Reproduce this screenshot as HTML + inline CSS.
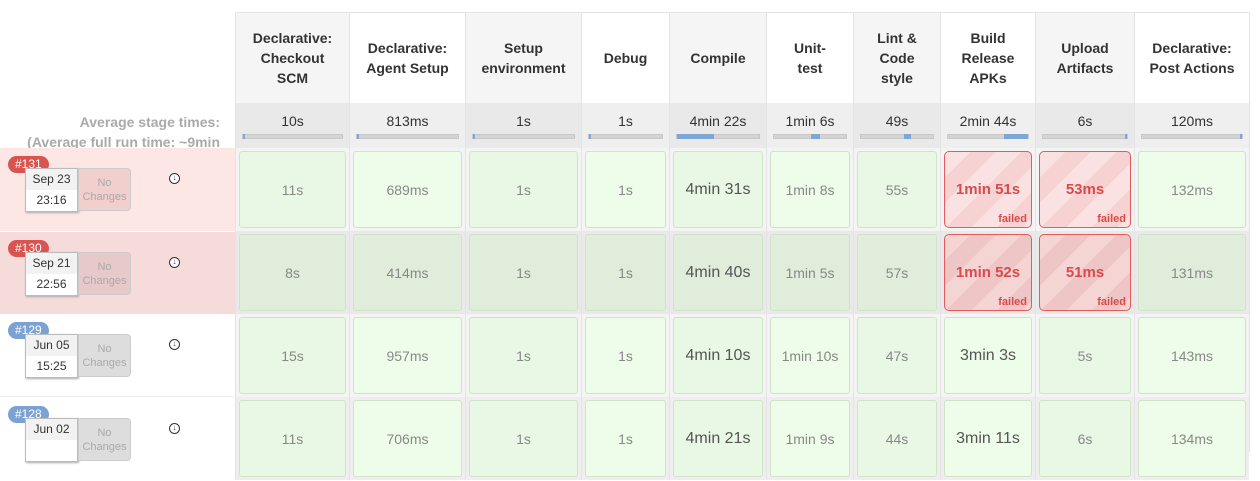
<!DOCTYPE html>
<html><head><meta charset="utf-8"><style>
*{box-sizing:border-box;margin:0;padding:0}
body{width:1260px;height:435px;overflow:hidden;background:#fff;font-family:"Liberation Sans",Helvetica,sans-serif;position:relative}
.col{position:absolute;top:12px;height:440px}
.hd{height:91px;display:flex;align-items:center;justify-content:center;text-align:center;font-weight:bold;font-size:14px;line-height:20px;color:#333;border-left:1px solid #e4e4e4;border-top:1px solid #e4e4e4}
.g .hd{background:#f5f5f5}
.avg{height:45px;background:#efefef;border-left:1px solid #e4e4e4;text-align:center;font-size:14px;color:#333;padding-top:10px;position:relative}
.g .avg{background:#e9e9e9}
.bar{position:absolute;left:6px;right:6px;top:31px;height:5px;background:#d4d4d4;border:1px solid #c8c8c8}
.bar i{position:absolute;top:-1px;height:5px;background:#7ea6d6}
.row{height:83px;padding:3px;border-left:1px solid #e4e4e4}
.r131{background:#f4f4f4}.r130{background:#e9e9e9}.r129{background:#f4f4f4}.r128{background:#eee}
.c{height:77px;border:1px solid #cfe3c9;border-radius:3px;background:#e9f8e4;display:flex;align-items:center;justify-content:center;font-size:14px;color:#888;position:relative}
.w .c{background:#eefde9}
.r130 .c{background:#dfedda}
.c.big{font-size:16px;color:#555}
.c.f{border:1.5px solid #e25c5c;border-radius:5px;color:#d94b4b;font-weight:bold;font-size:15px;background:repeating-linear-gradient(135deg,#fbe2e2 0 18px,#f6d2d2 18px 36px)}
.r130 .c.f{background:repeating-linear-gradient(135deg,#f5d4d4 0 18px,#efc6c6 18px 36px)}
.c.f b{position:absolute;right:4px;bottom:2px;font-size:11px;color:#d94b4b}
.lr{position:absolute;left:0;width:235px;height:83px}
.badge{position:absolute;left:8px;top:8px;height:17px;padding:0 7px;border-radius:9px;color:#fff;font-size:12px;line-height:17px}
.date{position:absolute;left:25px;top:20px;width:53px;height:44px;background:#fff;border:1px solid #bbb;box-shadow:1px 1px 2px #aaa;text-align:center;font-size:12px;color:#333}
.date div{height:21px;line-height:21px}
.date div:first-child{background:#f2f2f2}
.nc{position:absolute;left:78px;top:20px;width:53px;height:43px;background:#ddd;border:1px solid #ccc;border-radius:0 4px 4px 0;text-align:center;font-size:11px;color:#aaa;line-height:14px;padding-top:7px}
.ic{position:absolute;left:169px;top:25px;width:11px;height:11px;border-radius:50%;background:#fff;border:1.5px solid #333;color:#333;font-size:8px;line-height:8px;text-align:center;font-weight:bold}
</style></head><body>
<div style="position:absolute;left:0;top:114px;width:220px;text-align:right;font-size:14px;font-weight:bold;color:#aaa">Average stage times:</div>
<div style="position:absolute;left:0;top:134px;width:220px;text-align:right;font-size:14px;font-weight:bold;color:#aaa;white-space:nowrap;overflow:hidden">(Average <u>full</u> run time: ~9min</div>

<div class="lr" style="top:148px;background:#fde7e5"><span class="badge" style="background:#d9534f">#131</span><div class="date"><div>Sep 23</div><div>23:16</div></div><div class="nc" style="background:#f1cfcd">No<br>Changes</div><div class="ic">&#8595;</div></div>
<div class="lr" style="top:231px;background:#f5dbda;border-top:1px solid #fff"><span class="badge" style="background:#d9534f">#130</span><div class="date"><div>Sep 21</div><div>22:56</div></div><div class="nc" style="background:#e6c9c8">No<br>Changes</div><div class="ic">&#8595;</div></div>
<div class="lr" style="top:314px;border-bottom:1px solid #eee"><span class="badge" style="background:#7ba2d3">#129</span><div class="date"><div>Jun 05</div><div>15:25</div></div><div class="nc">No<br>Changes</div><div class="ic">&#8595;</div></div>
<div class="lr" style="top:398px"><span class="badge" style="background:#7ba2d3">#128</span><div class="date"><div>Jun 02</div><div></div></div><div class="nc">No<br>Changes</div><div class="ic">&#8595;</div></div>

<div class="col g" style="left:235px;width:114px"><div class="hd">Declarative:<br>Checkout<br>SCM</div><div class="avg">10s<div class="bar"><i style="left:0;width:2px"></i></div></div>
<div class="row r131"><div class="c">11s</div></div><div class="row r130"><div class="c">8s</div></div><div class="row r129"><div class="c">15s</div></div><div class="row r128"><div class="c">11s</div></div></div>
<div class="col w" style="left:349px;width:116px"><div class="hd">Declarative:<br>Agent Setup</div><div class="avg">813ms<div class="bar"><i style="left:0;width:2px"></i></div></div>
<div class="row r131"><div class="c">689ms</div></div><div class="row r130"><div class="c">414ms</div></div><div class="row r129"><div class="c">957ms</div></div><div class="row r128"><div class="c">706ms</div></div></div>
<div class="col g" style="left:465px;width:116px"><div class="hd">Setup<br>environment</div><div class="avg">1s<div class="bar"><i style="left:0;width:2px"></i></div></div>
<div class="row r131"><div class="c">1s</div></div><div class="row r130"><div class="c">1s</div></div><div class="row r129"><div class="c">1s</div></div><div class="row r128"><div class="c">1s</div></div></div>
<div class="col w" style="left:581px;width:88px"><div class="hd">Debug</div><div class="avg">1s<div class="bar"><i style="left:0;width:2px"></i></div></div>
<div class="row r131"><div class="c">1s</div></div><div class="row r130"><div class="c">1s</div></div><div class="row r129"><div class="c">1s</div></div><div class="row r128"><div class="c">1s</div></div></div>
<div class="col g" style="left:669px;width:97px"><div class="hd">Compile</div><div class="avg">4min 22s<div class="bar"><i style="left:0;width:45%"></i></div></div>
<div class="row r131"><div class="c big">4min 31s</div></div><div class="row r130"><div class="c big">4min 40s</div></div><div class="row r129"><div class="c big">4min 10s</div></div><div class="row r128"><div class="c big">4min 21s</div></div></div>
<div class="col w" style="left:766px;width:87px"><div class="hd">Unit-<br>test</div><div class="avg">1min 6s<div class="bar"><i style="left:52%;width:12%"></i></div></div>
<div class="row r131"><div class="c">1min 8s</div></div><div class="row r130"><div class="c">1min 5s</div></div><div class="row r129"><div class="c">1min 10s</div></div><div class="row r128"><div class="c">1min 9s</div></div></div>
<div class="col g" style="left:853px;width:87px"><div class="hd">Lint &amp;<br>Code<br>style</div><div class="avg">49s<div class="bar"><i style="left:60%;width:10%"></i></div></div>
<div class="row r131"><div class="c">55s</div></div><div class="row r130"><div class="c">57s</div></div><div class="row r129"><div class="c">47s</div></div><div class="row r128"><div class="c">44s</div></div></div>
<div class="col w" style="left:940px;width:95px"><div class="hd">Build<br>Release<br>APKs</div><div class="avg">2min 44s<div class="bar"><i style="left:70%;width:30%"></i></div></div>
<div class="row r131"><div class="c f">1min 51s<b>failed</b></div></div><div class="row r130"><div class="c f">1min 52s<b>failed</b></div></div><div class="row r129"><div class="c big">3min 3s</div></div><div class="row r128"><div class="c big">3min 11s</div></div></div>
<div class="col g" style="left:1035px;width:99px"><div class="hd">Upload<br>Artifacts</div><div class="avg">6s<div class="bar"><i style="right:0;width:2px"></i></div></div>
<div class="row r131"><div class="c f">53ms<b>failed</b></div></div><div class="row r130"><div class="c f">51ms<b>failed</b></div></div><div class="row r129"><div class="c">5s</div></div><div class="row r128"><div class="c">6s</div></div></div>
<div class="col w" style="left:1134px;width:116px;border-right:1px solid #e4e4e4"><div class="hd">Declarative:<br>Post Actions</div><div class="avg">120ms<div class="bar"><i style="right:0;width:2px"></i></div></div>
<div class="row r131"><div class="c">132ms</div></div><div class="row r130"><div class="c">131ms</div></div><div class="row r129"><div class="c">143ms</div></div><div class="row r128"><div class="c">134ms</div></div></div>
</body></html>
